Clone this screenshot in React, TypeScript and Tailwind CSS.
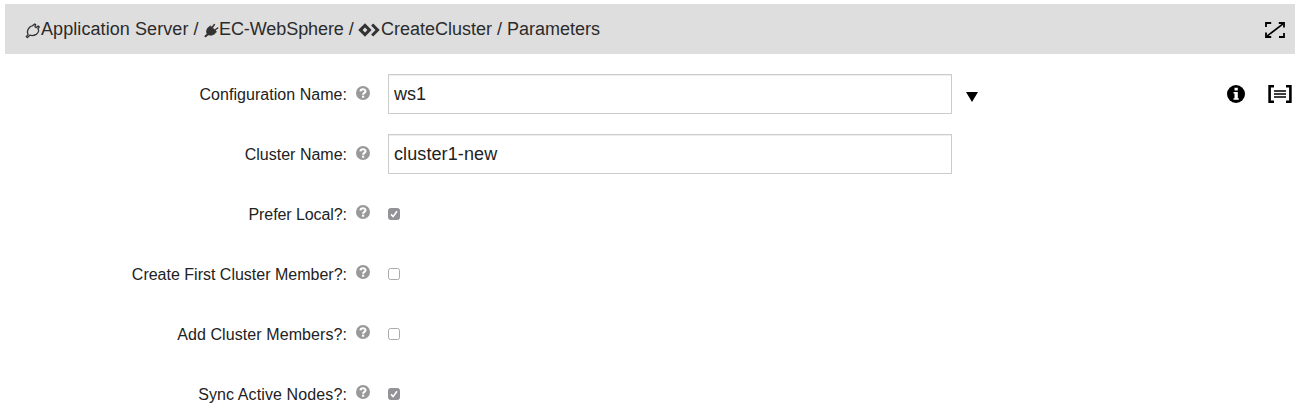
import type { ReactNode } from "react";

function PlugOutline() {
  return (
    <svg className="block h-[16px] w-[16px]" viewBox="0 0 16 16" fill="none" stroke="#333" strokeWidth="1.3" strokeLinejoin="round" strokeLinecap="round">
      <path d="M1.2 13.6 L3.1 11.6 C2 9.3 2.7 6.3 4.6 4.2 C5.4 3.3 6.4 2.8 7.4 2.8 L9.7 0.9 L10.7 1.8 L9.9 3.5 L11 4.6 L13.2 3 L14.3 4 L12.9 5.7 C14.4 7.6 13.5 9.8 11.2 11.4 C9 12.7 6.6 12.8 4.8 12.2 L2.4 14.6 Z" />
    </svg>
  );
}

function PlugSolid() {
  return (
    <svg className="block h-[15px] w-[15px]" viewBox="0 0 15 15" fill="none" stroke="#333" strokeLinecap="round">
      <path d="M3.2 10.8 C1.7 8.4 3 5 5.3 3.7 L6.5 2.9 L12.4 8.6 L11.6 9.8 C9.8 12.1 6.2 13 3.8 11.4 Z" fill="#333" strokeWidth="0.8" />
      <path d="M8.4 4.2 L10.4 1.5 M11 7 L13.7 5" strokeWidth="1.5" />
      <path d="M4.2 10.9 L1.5 13.3" strokeWidth="2" />
    </svg>
  );
}

function StepIcon() {
  return (
    <svg className="block h-[14px] w-[22px]" viewBox="0 0 22 14">
      <path d="M7 0.2 L13.6 7 L7 13.8 L0.2 7 Z M7 4.5 L4.6 7 L7 9.4 L9.4 7 Z" fill="#333" fillRule="evenodd" />
      <path d="M13.1 2.4 L15.2 0.5 L21.7 7 L15.2 13.5 L13.1 11.5 L17.5 7 Z" fill="#333" />
    </svg>
  );
}

function ExpandIcon() {
  return (
    <svg className="block h-[18px] w-[22px]" viewBox="0 0 22 18" fill="none" stroke="#000" strokeWidth="1.8">
      <path d="M2 6 V2 H7.2 M15 16 H20 V12" />
      <path d="M3 15.2 L19 2.8" strokeWidth="1.6" />
      <path d="M14.8 2 H20 V6.5 M2 11.5 V16 H7.2" />
    </svg>
  );
}

function HelpIcon() {
  return (
    <svg className="block h-[14px] w-[14px]" viewBox="0 0 14 14">
      <circle cx="7" cy="7" r="7" fill="#999" />
      <path d="M4.5 5.4 C4.6 2.6 9.5 2.6 9.5 5.2 C9.5 6.9 7.1 6.8 7.1 8.8" fill="none" stroke="#fff" strokeWidth="2.1" />
      <rect x="6" y="9.7" width="2.2" height="2" fill="#fff" />
    </svg>
  );
}

function InfoIcon() {
  return (
    <svg className="block h-[18px] w-[18px]" viewBox="0 0 18 18">
      <circle cx="9" cy="9" r="9" fill="#000" />
      <path d="M7.5 2.7 H10.8 V5.6 H7.5 Z M6.5 7 H10.8 V13.2 H11.8 V14.8 H6.5 V13.2 H7.5 V8.6 H6.5 Z" fill="#fff" />
    </svg>
  );
}

function BracketIcon() {
  return (
    <svg className="block h-[18px] w-[24px]" viewBox="0 0 24 18" fill="none" stroke="#000">
      <path d="M6 1.2 H1.6 V16.8 H6 M18 1.2 H22.4 V16.8 H18" strokeWidth="2.6" />
      <path d="M6 6 H18 M6 9 H18 M6 12 H18" strokeWidth="1.7" />
    </svg>
  );
}

function Row({ label, spacing, raised = false, children }: { label: string; spacing: string; raised?: boolean; children: ReactNode }) {
  return (
    <div className="flex h-[60px] items-center">
      <div className={`w-[347px] pt-px text-right text-[16px] leading-5 whitespace-nowrap text-[#222] ${spacing}`}>{label}</div>
      <div className={`mr-[18px] ml-[9px] ${raised ? "-mt-[4px]" : "-mt-[3px]"}`}><HelpIcon /></div>
      {children}
    </div>
  );
}

function TextField({ value, spacing = "tracking-normal" }: { value: string; spacing?: string }) {
  return (
    <input
      readOnly
      value={value}
      className={`h-[40px] w-[564px] border border-[#ccc] bg-white px-[5px] text-[18px] text-[#222] shadow-[inset_0_1px_1px_rgba(0,0,0,0.07)] outline-none ${spacing}`}
    />
  );
}

function Check({ checked = false }: { checked?: boolean }) {
  return (
    <div className={`h-[12px] w-[12px] rounded-[2.5px] border ${checked ? "border-[#929297] bg-[#929297]" : "border-[#aaa] bg-white"}`}>
      {checked && (
        <svg className="block h-[10px] w-[10px]" viewBox="0 0 10 10" fill="none" stroke="#fff" strokeWidth="1.6">
          <path d="M2 5.4 L4.1 7.6 L8 2.2" />
        </svg>
      )}
    </div>
  );
}

export default function App() {
  return (
    <div className="h-[418px] overflow-hidden bg-white pt-1 font-['Liberation_Sans',Arial,sans-serif]">
      <header className="mr-[7px] ml-[5px] flex h-[50px] items-center bg-[#dedede] pr-[9px] pl-[20px] text-[18px] whitespace-nowrap text-[#2b2b2b]">
        <div className="mt-[3px] w-[16px]"><PlugOutline /></div>
        <span className="w-[163px] tracking-[0.08px]">Application Server /</span>
        <div className="mt-[2px] w-[15px]"><PlugSolid /></div>
        <span className="w-[139px] tracking-[-0.08px]">EC-WebSphere /</span>
        <div className="mt-[1px] w-[23px]"><StepIcon /></div>
        <span>CreateCluster / Parameters</span>
        <div className="mt-[2px] ml-auto"><ExpandIcon /></div>
      </header>
      <main className="pt-[10px]">
        <Row label="Configuration Name:" spacing="tracking-[0.04px]">
          <TextField value="ws1" />
          <div className="mt-[6px] ml-[14px]">
            <svg className="block h-[10px] w-[12px]" viewBox="0 0 12 10"><path d="M0 0 H12 L6 10 Z" fill="#000" /></svg>
          </div>
          <div className="mr-[10px] ml-auto flex items-center gap-[23px]">
            <InfoIcon />
            <BracketIcon />
          </div>
        </Row>
        <Row label="Cluster Name:" spacing="tracking-normal"><TextField value="cluster1-new" spacing="tracking-[0.1px]" /></Row>
        <Row label="Prefer Local?:" spacing="tracking-[-0.08px]" raised><Check checked /></Row>
        <Row label="Create First Cluster Member?:" spacing="tracking-normal" raised><Check /></Row>
        <Row label="Add Cluster Members?:" spacing="tracking-[0.08px]" raised><Check /></Row>
        <Row label="Sync Active Nodes?:" spacing="tracking-[0.11px]" raised><Check checked /></Row>
      </main>
    </div>
  );
}
